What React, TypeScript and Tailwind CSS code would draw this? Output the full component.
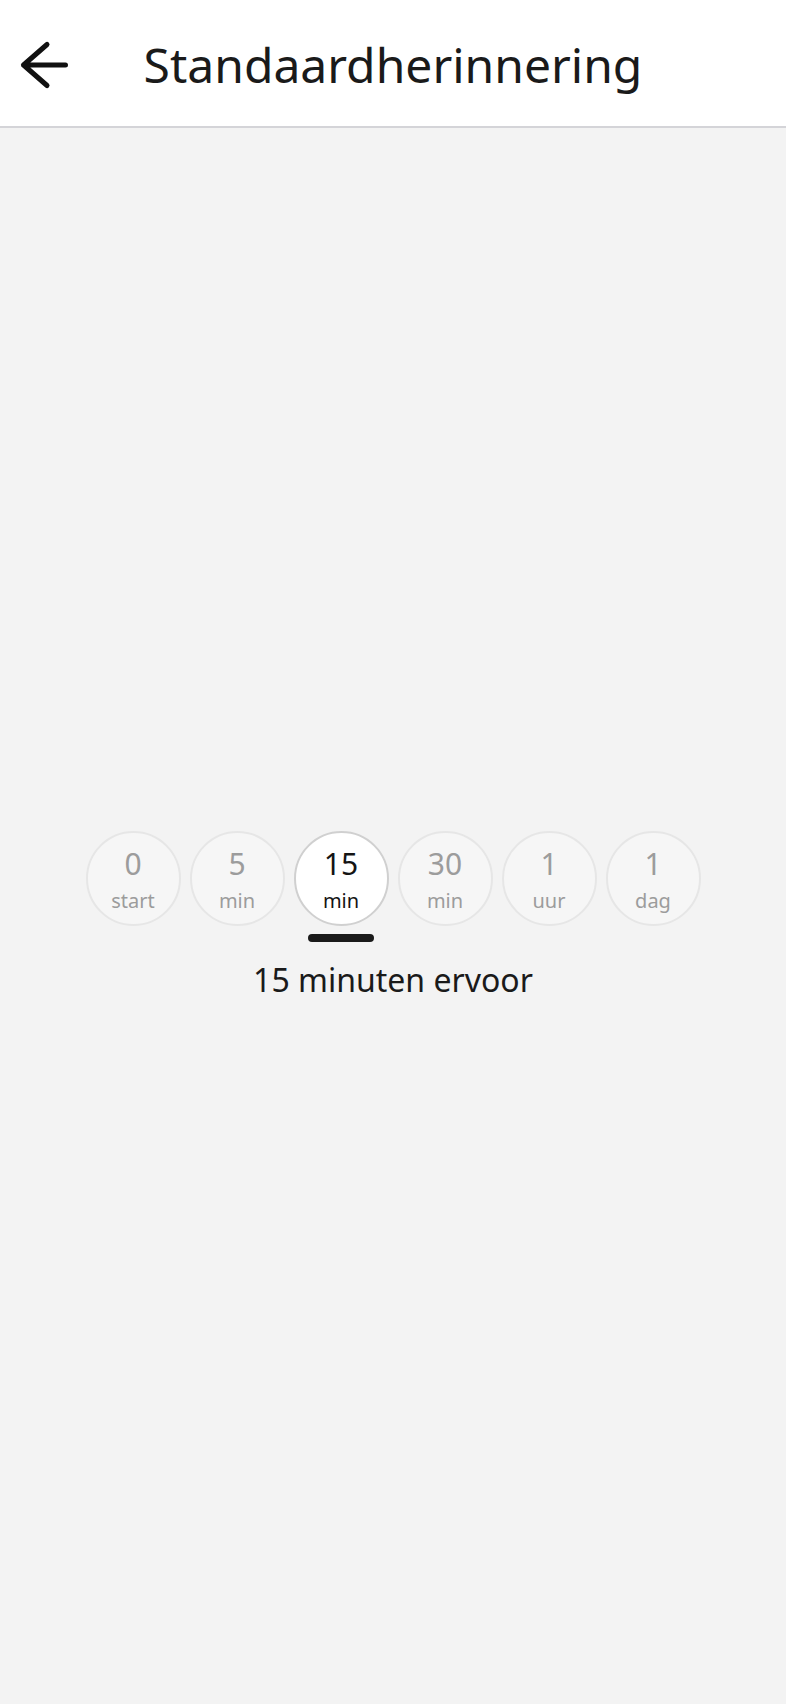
import React from "react";

type Option = { value: string; unit: string };

const options: Option[] = [
    { value: "0", unit: "start" },
    { value: "5", unit: "min" },
    { value: "15", unit: "min" },
    { value: "30", unit: "min" },
    { value: "1", unit: "uur" },
    { value: "1", unit: "dag" },
];

const selected = 2;

const BackArrow = () => (
    <svg width="56" height="50" viewBox="0 0 56 50" fill="none">
        <path
            d="M7.5 25H49.5M31 4.5L7.5 25L31 45.5"
            stroke="#111111"
            strokeWidth="5"
            strokeLinecap="round"
            strokeLinejoin="round"
        />
    </svg>
);

const App = () => {
    return (
        <div
            className="flex flex-col h-screen bg-[#f3f3f3] text-[#1a1a1a]"
            style={{ fontFamily: '"Noto Sans", "Open Sans", sans-serif' }}
        >
            <header className="grid grid-cols-[80px_1fr_80px] items-center h-[128px] pt-[4px] bg-white border-b-2 border-b-[#d4d4d8]">
                <button className="flex items-center pl-[16px]">
                    <BackArrow />
                </button>
                <h1 className="text-center text-[48px] leading-[56px] font-normal text-[#1a1a1a]">
                    Standaardherinnering
                </h1>
                <div />
            </header>

            <main className="flex-1 flex flex-col items-center justify-center">
                <div className="flex items-center gap-[9px]">
                    {options.map((o, i) => (
                        <div
                            key={i}
                            className={
                                i === selected
                                    ? "flex flex-col items-center justify-center w-[95px] h-[95px] pt-[3px] rounded-full bg-white border-2 border-[#d0d0d0] text-[#141414]"
                                    : "flex flex-col items-center justify-center w-[95px] h-[95px] pt-[3px] rounded-full bg-[#f6f6f6] border-2 border-[#e6e6e6] text-[#9c9c9c]"
                            }
                        >
                            <span className="text-[30px] leading-[34px]">
                                {o.value}
                            </span>
                            <span className="text-[20px] leading-[22px] mt-[9px]">
                                {o.unit}
                            </span>
                        </div>
                    ))}
                </div>
                <div className="flex gap-[9px] mt-[8px]">
                    {options.map((o, i) => (
                        <div key={i} className="flex justify-center w-[95px]">
                            {i === selected && (
                                <div className="w-[66px] h-[8px] rounded-full bg-[#1a1a1a]" />
                            )}
                        </div>
                    ))}
                </div>
                <p className="mt-[16px] text-[32px] leading-[44px] text-[#1a1a1a]">
                    15 minuten ervoor
                </p>
            </main>
        </div>
    );
};

export default App;
